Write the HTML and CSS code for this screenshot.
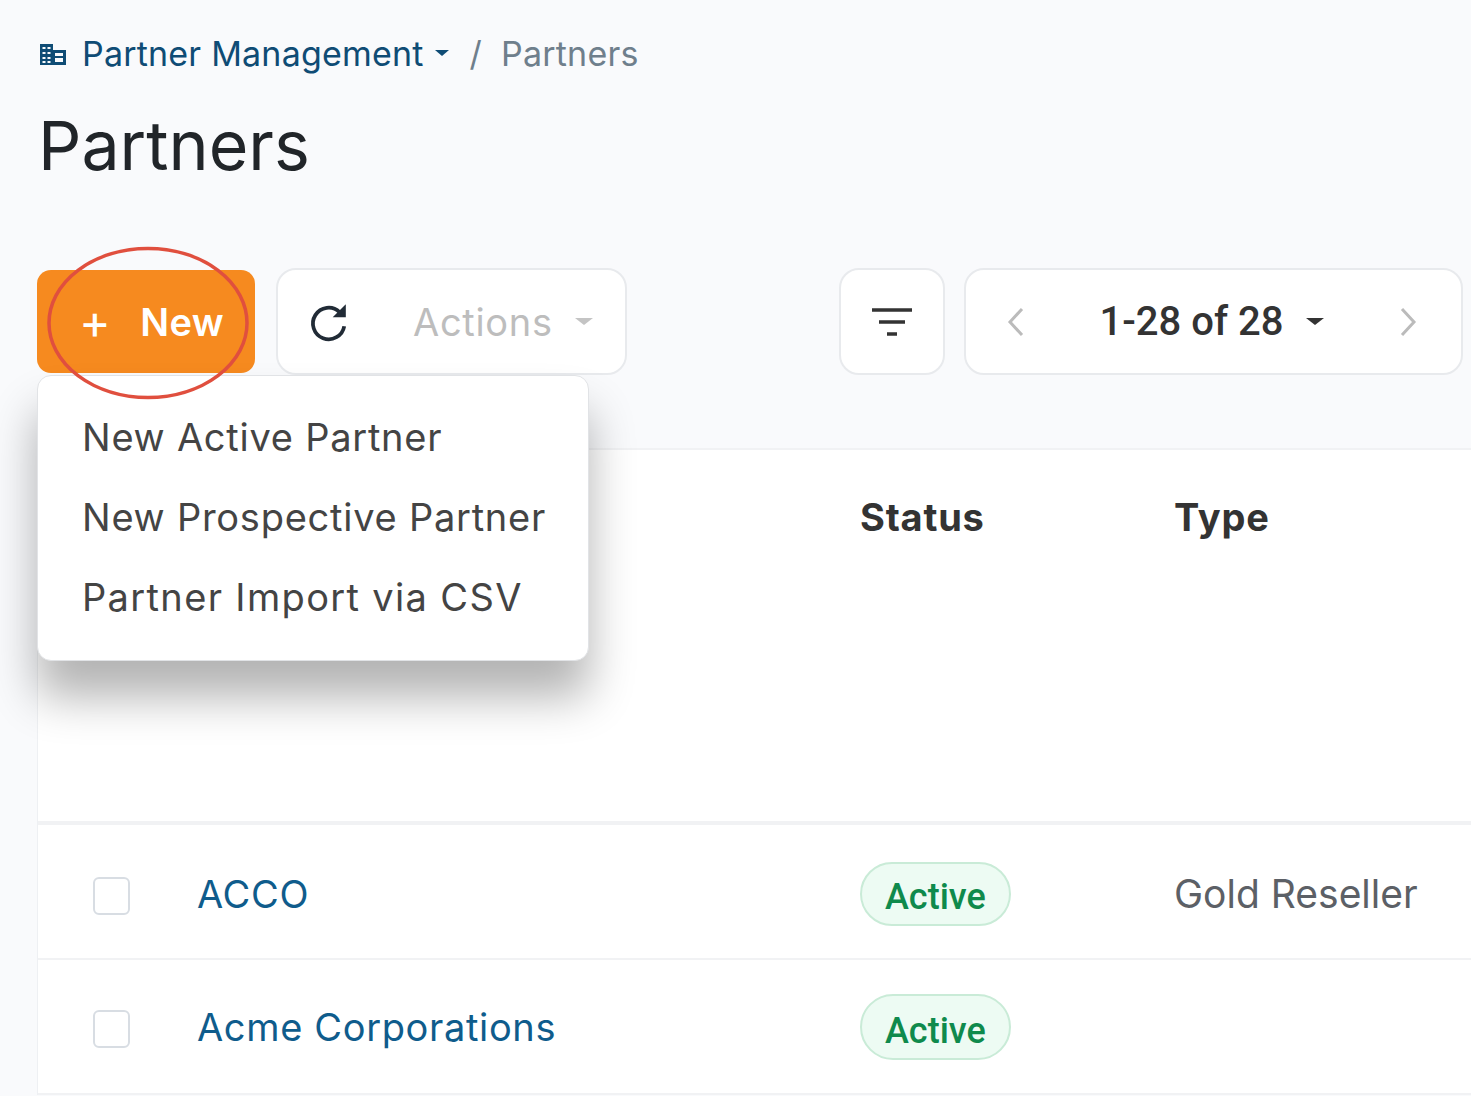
FILE: index.html
```html
<!DOCTYPE html>
<html lang="en">
<head>
<meta charset="utf-8">
<title>Partners</title>
<link rel="stylesheet" href="styles.css">
</head>
<body>
<main class="page">
  <nav class="crumbs">
    <svg class="crumb-icon" viewBox="0 0 28 23" aria-hidden="true">
      <path d="M1 1h13v6h13v15H1z" fill="#0f4c75"/>
      <path d="M3.500 4h3v2h-3zM8.500 4h3v2h-3zM3.500 9h3v2h-3zM8.500 9h3v2h-3zM3.500 14h3v2h-3zM8.500 14h3v2h-3zM3.500 18h3v2h-3zM8.500 18h3v2h-3zM16 10h8v3h-8zM16 15h8v4h-8z" fill="#f9fafc"/>
    </svg>
    <a class="crumb-link">Partner Management</a>
    <span class="caret caret-blue"></span>
    <span class="crumb-sep">/</span>
    <span class="crumb-current">Partners</span>
  </nav>
  <h1 class="title">Partners</h1>
  <div class="toolbar">
    <div class="new-wrap">
      <button class="btn-new"><span class="plus">+</span><span>New</span></button>
      <div class="menu">
        <div class="menu-item">New Active Partner</div>
        <div class="menu-item">New Prospective Partner</div>
        <div class="menu-item menu-item-wide">Partner Import via CSV</div>
      </div>
      <svg class="ring" viewBox="0 0 204 156" aria-hidden="true"><ellipse cx="102" cy="78" rx="99" ry="74.500" fill="none" stroke="#e04f3e" stroke-width="3.500"/></svg>
    </div>
    <div class="box box-actions">
      <svg class="refresh" viewBox="0 0 40 40" aria-hidden="true">
        <path d="M30 10.500A15 15 0 1 0 34.500 24" fill="none" stroke="#212b36" stroke-width="3.600"/>
        <path d="M23.500 15.500H36V3z" fill="#212b36"/>
      </svg>
      <span class="actions">Actions</span>
      <span class="caret caret-grey"></span>
    </div>
    <div class="spacer"></div>
    <div class="box box-filter">
      <svg class="filter" viewBox="0 0 40 30" aria-hidden="true">
        <path d="M0 3h40M7 15h26M15 27h10" stroke="#333" stroke-width="3.500" fill="none"/>
      </svg>
    </div>
    <div class="box box-pager">
      <svg class="chev" viewBox="0 0 18 30" aria-hidden="true"><path d="M15 2L3 15l12 13" fill="none" stroke="#bbb" stroke-width="3"/></svg>
      <div class="count"><span>1-28 of 28</span><span class="caret caret-dark"></span></div>
      <svg class="chev" viewBox="0 0 18 30" aria-hidden="true"><path d="M3 2l12 13L3 28" fill="none" stroke="#bbb" stroke-width="3"/></svg>
    </div>
  </div>
  <section class="card">
    <div class="row row-head">
      <div></div><div></div>
      <div class="th">Status</div>
      <div class="th">Type</div>
    </div>
    <div class="row row-one">
      <div class="check"></div>
      <a class="name">ACCO</a>
      <div><span class="pill">Active</span></div>
      <div class="type">Gold Reseller</div>
    </div>
    <div class="row row-two">
      <div class="check"></div>
      <a class="name">Acme Corporations</a>
      <div><span class="pill pill-tall">Active</span></div>
      <div class="type"></div>
    </div>
  </section>
</main>
</body>
</html>
```
FILE: styles.css
```css
* { box-sizing: border-box; }
html, body { margin: 0; height: 100%; overflow: hidden; background: #f9fafc; }
body { font-family: "Inter", "Noto Sans", sans-serif; color: #212b36; }
.page { position: relative; width: 1471px; height: 1096px; padding: 29px 8px 0 37px; overflow: hidden; }

.crumbs { display: flex; align-items: center; height: 48px; font-size: 34px; letter-spacing: .2px; }
.crumb-icon { width: 28px; height: 23px; margin: 2px 15px 0 2px; }
.crumb-link { color: #0f4c75; }
.crumb-sep { color: #6f7f8c; margin: 0 19px 0 21px; }
.crumb-current { color: #6f7f8c; }
.caret { display: inline-block; width: 0; height: 0; border-style: solid; border-color: transparent; border-width: 6.500px 7.500px 0; }
.caret-blue { border-top-color: #0f4c75; margin-left: 11px; }
.caret-grey { border-top-color: #c4c4c4; border-width: 7px 9.500px 0; margin-left: 22px; }
.caret-dark { border-top-color: #333; border-width: 7px 9.500px 0; margin-left: 23px; }

.title { margin: 29px 0 0 1px; height: 78px; font-size: 68px; line-height: 78px; font-weight: 400; color: #212529; }

.toolbar { position: relative; z-index: 3; display: flex; align-items: stretch; height: 107px; margin-top: 84px; }
.new-wrap { position: relative; width: 218px; margin-right: 21px; }
.btn-new { display: flex; align-items: center; width: 100%; height: 103px; margin-top: 2px; padding: 0 0 0 42px; border: 0; border-radius: 14px; background: #f68a1f; color: #fff; font: 600 38px "Inter", sans-serif; letter-spacing: .4px; }
.plus { margin-right: 29px; font-weight: 400; font-size: 48px; line-height: 48px; }
.ring { position: absolute; left: 9px; top: -23px; width: 204px; height: 156px; z-index: 3; }
.menu { position: absolute; left: 0; top: 107px; width: 552px; height: 286px; padding-top: 21px; background: #fff; border-radius: 14px; border: 1px solid #e1e3e6; box-shadow: 0 36px 46px rgba(0,0,0,.3); z-index: 2; }
.menu-item { height: 80px; padding-left: 44px; font-size: 38px; letter-spacing: .75px; line-height: 80px; color: #444; white-space: nowrap; }
.menu-item-wide { letter-spacing: 1.350px; }

.box { display: flex; align-items: center; background: #fff; border: 2px solid #e8eaed; border-radius: 20px; }
.box-actions { width: 351px; padding-left: 30px; }
.refresh { width: 42px; height: 42px; margin-right: 63px; }
.actions { font-size: 38px; letter-spacing: .7px; color: #bdbdbd; }
.spacer { flex: 1; }
.box-filter { width: 106px; justify-content: center; margin-right: 19px; }
.filter { width: 40px; height: 30px; }
.box-pager { width: 499px; justify-content: space-between; padding: 0 44px 0 41px; }
.chev { width: 18px; height: 30px; }
.count { display: flex; align-items: center; font: 500 40px "Roboto", sans-serif; color: #333; }

.card { margin-top: 73px; width: 1460px; background: #fff; border-left: 1px solid #eef0f3; border-top: 2px solid #f1f2f4; }
.row { display: grid; grid-template-columns: 105px 663px 314px 1fr; align-items: center; padding-left: 54px; border-bottom: 2px solid #f1f2f4; }
.row-head { height: 375px; align-items: start; padding-top: 44px; border-bottom-width: 4px; }
.row-one { height: 135px; padding-top: 4px; }
.row-two { height: 135px; }
.th { font-size: 38px; letter-spacing: .8px; font-weight: 700; color: #333; }
.check { width: 37px; height: 38px; margin: 4px 0 0 1px; background: #fff; border: 2px solid #d8dde3; border-radius: 6px; }
.name { font-size: 38px; letter-spacing: .65px; color: #0f5c8c; }
.pill { display: inline-block; height: 64px; padding: 0 23px; font: 500 36px/66px "Roboto", sans-serif; color: #0f8a4c; background: #edfbf3; border: 2px solid #c9ebd7; border-radius: 33px; }
.pill-tall { height: 66px; line-height: 70px; }
.type { font: 400 39px "Inter", sans-serif; color: #5c6066; white-space: nowrap; }
```
